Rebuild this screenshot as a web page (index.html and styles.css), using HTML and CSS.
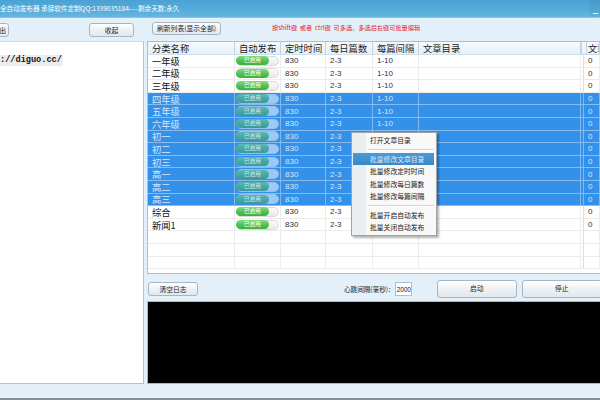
FILE: index.html
```html
<!DOCTYPE html>
<html lang="zh">
<head>
<meta charset="utf-8">
<title>全自动发布器</title>
<link rel="stylesheet" href="styles.css">
</head>
<body>
<div class="win">
  <div class="titlebar">
    <span class="title">全自动发布器 承接软件定制QQ:1339035184----剩余天数:永久</span>
    <span class="minbtn"><span class="minbar"></span></span>
  </div>
  <div class="main">
    <div class="leftcol">
      <div class="ltools">
        <button class="btn btn-cut">导出</button>
        <button class="btn btn-fold">收起</button>
      </div>
      <div class="logbox"><span class="url">://diguo.cc/</span></div>
    </div>
    <div class="rightcol">
      <div class="rtools">
        <button class="btn btn-refresh">刷新列表(显示全部)</button>
        <span class="hint">按shift键 &nbsp;或者 &nbsp;ctrl键 &nbsp;可多选，多选后右键可批量编辑</span>
      </div>
      <div class="grid">
        <div class="row head">
          <div class="c">分类名称</div><div class="c">自动发布</div><div class="c">定时时间</div><div class="c">每日篇数</div><div class="c">每篇间隔</div><div class="c">文章目录</div><div class="c split"></div><div class="c">文章</div>
        </div>
        <div class="row"><div class="c name">一年级</div><div class="c"><span class="track"><span class="pill">已启用</span></span></div><div class="c num">830</div><div class="c num">2-3</div><div class="c num">1-10</div><div class="c"></div><div class="c split"></div><div class="c num">0</div></div>
        <div class="row"><div class="c name">二年级</div><div class="c"><span class="track"><span class="pill">已启用</span></span></div><div class="c num">830</div><div class="c num">2-3</div><div class="c num">1-10</div><div class="c"></div><div class="c split"></div><div class="c num">0</div></div>
        <div class="row"><div class="c name">三年级</div><div class="c"><span class="track"><span class="pill">已启用</span></span></div><div class="c num">830</div><div class="c num">2-3</div><div class="c num">1-10</div><div class="c"></div><div class="c split"></div><div class="c num">0</div></div>
        <div class="row sel"><div class="c name">四年级</div><div class="c"><span class="track"><span class="pill">已启用</span></span></div><div class="c num">830</div><div class="c num">2-3</div><div class="c num">1-10</div><div class="c"></div><div class="c split"></div><div class="c num">0</div></div>
        <div class="row sel"><div class="c name">五年级</div><div class="c"><span class="track"><span class="pill">已启用</span></span></div><div class="c num">830</div><div class="c num">2-3</div><div class="c num">1-10</div><div class="c"></div><div class="c split"></div><div class="c num">0</div></div>
        <div class="row sel"><div class="c name">六年级</div><div class="c"><span class="track"><span class="pill">已启用</span></span></div><div class="c num">830</div><div class="c num">2-3</div><div class="c num">1-10</div><div class="c"></div><div class="c split"></div><div class="c num">0</div></div>
        <div class="row sel"><div class="c name">初一</div><div class="c"><span class="track"><span class="pill">已启用</span></span></div><div class="c num">830</div><div class="c num">2-3</div><div class="c num">1-10</div><div class="c"></div><div class="c split"></div><div class="c num">0</div></div>
        <div class="row sel"><div class="c name">初二</div><div class="c"><span class="track"><span class="pill">已启用</span></span></div><div class="c num">830</div><div class="c num">2-3</div><div class="c num">1-10</div><div class="c"></div><div class="c split"></div><div class="c num">0</div></div>
        <div class="row sel"><div class="c name">初三</div><div class="c"><span class="track"><span class="pill">已启用</span></span></div><div class="c num">830</div><div class="c num">2-3</div><div class="c num">1-10</div><div class="c"></div><div class="c split"></div><div class="c num">0</div></div>
        <div class="row sel"><div class="c name">高一</div><div class="c"><span class="track"><span class="pill">已启用</span></span></div><div class="c num">830</div><div class="c num">2-3</div><div class="c num">1-10</div><div class="c"></div><div class="c split"></div><div class="c num">0</div></div>
        <div class="row sel"><div class="c name">高二</div><div class="c"><span class="track"><span class="pill">已启用</span></span></div><div class="c num">830</div><div class="c num">2-3</div><div class="c num">1-10</div><div class="c"></div><div class="c split"></div><div class="c num">0</div></div>
        <div class="row sel"><div class="c name">高三</div><div class="c"><span class="track"><span class="pill">已启用</span></span></div><div class="c num">830</div><div class="c num">2-3</div><div class="c num">1-10</div><div class="c"></div><div class="c split"></div><div class="c num">0</div></div>
        <div class="row"><div class="c name">综合</div><div class="c"><span class="track"><span class="pill">已启用</span></span></div><div class="c num">830</div><div class="c num">2-3</div><div class="c num">1-10</div><div class="c"></div><div class="c split"></div><div class="c num">0</div></div>
        <div class="row"><div class="c name">新闻1</div><div class="c"><span class="track"><span class="pill">已启用</span></span></div><div class="c num">830</div><div class="c num">2-3</div><div class="c num">1-10</div><div class="c"></div><div class="c split"></div><div class="c num">0</div></div>
        <div class="row empty"><div class="c"></div><div class="c"></div><div class="c"></div><div class="c"></div><div class="c"></div><div class="c"></div><div class="c split"></div><div class="c"></div></div>
        <div class="row empty"><div class="c"></div><div class="c"></div><div class="c"></div><div class="c"></div><div class="c"></div><div class="c"></div><div class="c split"></div><div class="c"></div></div>
        <div class="row empty"><div class="c"></div><div class="c"></div><div class="c"></div><div class="c"></div><div class="c"></div><div class="c"></div><div class="c split"></div><div class="c"></div></div>
      </div>
      <div class="controls">
        <button class="btn btn-clear">清空日志</button>
        <span class="beat-label">心跳间隔(毫秒)：</span>
        <span class="beat-input">2000</span>
        <button class="btn btn-big btn-start">启动</button>
        <button class="btn btn-big btn-stop">停止</button>
      </div>
      <div class="console"></div>
    </div>
  </div>
  <div class="status"></div>

  <div class="menu">
    <div class="mi">打开文章目录</div>
    <div class="msep"></div>
    <div class="mi hot">批量修改文章目录</div>
    <div class="mi">批量修改定时时间</div>
    <div class="mi">批量修改每日篇数</div>
    <div class="mi">批量修改每篇间隔</div>
    <div class="msep"></div>
    <div class="mi">批量开启自动发布</div>
    <div class="mi">批量关闭自动发布</div>
  </div>
</div>
</body>
</html>
```

FILE: styles.css
```css
* { box-sizing: border-box; }

html, body {
  margin: 0;
  padding: 0;
  width: 600px;
  height: 400px;
  overflow: hidden;
}

body {
  font-family: "Noto Sans CJK SC", "Noto Sans", sans-serif;
  color: #111;
  background: #e3f0f9;
}

.win {
  position: relative;
  width: 600px;
  height: 400px;
  display: flex;
  flex-direction: column;
  overflow: hidden;
}

/* ---------- title bar ---------- */
.titlebar {
  height: 18px;
  flex: none;
  display: flex;
  align-items: center;
  justify-content: space-between;
  background: linear-gradient(to bottom, #4aa2d4 0%, #56acda 60%, #66b6e0 100%);
  border-bottom: 1px solid #8cc4e4;
}

.title {
  color: #fff;
  font-size: 6.6px;
  line-height: 1;
  padding-left: 0;
  white-space: nowrap;
  margin-top: -1px;
}

.minbtn {
  width: 10px;
  height: 17px;
  display: flex;
  align-items: flex-end;
  justify-content: center;
  padding-bottom: 3px;
  background: rgba(0, 0, 0, 0.04);
}

.minbar {
  width: 5px;
  height: 1px;
  background: #e8f4fb;
}

/* ---------- main area ---------- */
.main {
  height: 366px;
  flex: none;
  display: grid;
  grid-template-columns: 144px 1fr;
  column-gap: 3px;
}

.leftcol, .rightcol {
  display: flex;
  flex-direction: column;
  min-width: 0;
}

.ltools, .rtools {
  height: 23px;
  flex: none;
  display: flex;
  align-items: center;
}

/* buttons */
.btn {
  font-family: "Noto Sans CJK SC", sans-serif;
  font-size: 6.8px;
  color: #222;
  height: 14px;
  padding: 0;
  border: 1px solid #a9b6c2;
  border-radius: 3px;
  background: linear-gradient(to bottom, #fdfeff 0%, #eef2f5 50%, #e1e7ec 100%);
  line-height: 1;
  display: flex;
  align-items: center;
  justify-content: center;
  white-space: nowrap;
  flex: none;
}

.btn-cut {
  width: 45px;
  margin-left: -36px;
  margin-top: 1px;
  justify-content: flex-end;
  padding-right: 2px;
}

.btn-fold {
  width: 45px;
  margin-left: 80px;
  margin-top: 1px;
}

.btn-refresh {
  width: 69px;
  height: 13px;
  margin-left: 5px;
  margin-top: -3px;
}

.hint {
  margin-left: 51px;
  margin-top: -4px;
  font-size: 6.2px;
  color: #e0242a;
  white-space: nowrap;
}

/* left text box */
.logbox {
  flex: 1;
  background: #fff;
  border-top: 1px solid #c6dcea;
  border-right: 1px solid #a6c6da;
  border-bottom: 1px solid #a6c6da;
  padding-top: 1px;
}

.url {
  display: inline-block;
  font-family: "Liberation Mono", "DejaVu Sans Mono", monospace;
  font-weight: bold;
  font-size: 8.6px;
  line-height: 11px;
  color: #111;
  background: #ececec;
  padding-right: 1px;
}

/* ---------- data grid ---------- */
.grid {
  height: 233px;
  flex: none;
  background: #fff;
  border: 1px solid #9fc2d9;
  border-right: none;
  overflow: hidden;
}

.row {
  display: grid;
  grid-template-columns: 87px 46px 45px 47px 46px 162px 3px 1fr;
  height: 12.6px;
  border-bottom: 1px solid #ececec;
}

.c {
  border-right: 1px solid #ececec;
  display: flex;
  align-items: center;
  padding-left: 3px;
  overflow: hidden;
  white-space: nowrap;
  min-width: 0;
}

.c.split {
  padding: 0;
  border-right: 1px solid #dcdcdc;
}

.head {
  height: 13px;
  background: linear-gradient(to bottom, #f6fafd 0%, #e4f0f9 100%);
  border-bottom: 1px solid #cfe0ec;
}

.head .c {
  font-size: 9.3px;
  color: #222;
  border-right: 1px solid #c3d3df;
  padding-left: 4px;
}

.head .c.split {
  border-right: 1px solid #c3d3df;
  border-left: 1px solid #c3d3df;
}

.name {
  font-size: 9.3px;
  padding-left: 4px;
}

.num {
  font-family: "Liberation Sans", "DejaVu Sans", sans-serif;
  font-size: 8px;
  color: #333;
  padding-left: 4px;
}

/* toggle pill */
.track {
  width: 43px;
  height: 10px;
  border-radius: 5px;
  background: linear-gradient(to bottom, #fbfbfb, #e9e9e9);
  border: 1px solid #dadada;
  display: flex;
  align-items: center;
  margin-left: -2px;
}

.pill {
  width: 33px;
  height: 9px;
  margin-left: -1px;
  border-radius: 5px;
  background: linear-gradient(to bottom, #86dc84 0%, #52c052 55%, #3eaf40 100%);
  color: #fff;
  font-size: 5.6px;
  line-height: 9px;
  text-align: center;
}

/* selected rows */
.sel {
  background: #3391e9;
  border-bottom: 1px solid #86bdf1;
}

.sel .c {
  border-right-color: #7fb7ee;
}

.sel .name, .sel .num {
  color: #d6e7fb;
}

.sel .track {
  background: #9dc9f5;
  border-color: #8ec0f2;
}

.sel .pill {
  background: linear-gradient(to bottom, #5ab8b4 0%, #44a5a3 60%, #3b9a9b 100%);
  color: #cfe6f4;
}

/* ---------- controls ---------- */
.controls {
  height: 19px;
  margin-top: 5px;
  flex: none;
  display: flex;
  align-items: center;
}

.btn-clear {
  width: 50px;
  margin-left: 1px;
  margin-top: 1px;
}

.beat-label {
  margin-left: 146px;
  width: 54px;
  font-size: 6.6px;
  white-space: nowrap;
  color: #222;
}

.beat-input {
  width: 28px;
  height: 14px;
  margin-top: 1px;
  background: #fff;
  border: 1px solid #a3c4dc;
  font-family: "Liberation Sans", sans-serif;
  font-size: 6.4px;
  display: flex;
  align-items: center;
  padding-left: 1px;
}

.btn-big {
  width: 80px;
  height: 18px;
  border-radius: 3px;
}

.btn-start { margin-left: 25px; }
.btn-stop { margin-left: 5px; }

.console {
  height: 83px;
  margin-top: 3px;
  flex: none;
  background: #000;
  border: 1px solid #9dbdd3;
  border-right: none;
}

/* ---------- status ---------- */
.status {
  flex: 1;
  border-bottom: 2px solid #8a8f94;
}

/* ---------- context menu ---------- */
.menu {
  position: absolute;
  left: 351px;
  top: 132px;
  width: 86px;
  padding: 1px 2px 2px 1px;
  background: linear-gradient(to right, #e9eef1 0px, #e9eef1 14px, #f8f8f8 14px);
  border: 1px solid #9da3a8;
  box-shadow: 2px 2px 2px rgba(0, 0, 0, 0.3);
}

.mi {
  height: 12.2px;
  padding-left: 17px;
  display: flex;
  align-items: center;
  font-size: 6.8px;
  color: #222;
  white-space: nowrap;
}

.mi.hot {
  background: linear-gradient(to bottom, #4b9ad6, #3a88c8);
  color: #dcebf7;
}

.msep {
  height: 7px;
  margin-left: 15px;
  display: flex;
  align-items: center;
}

.msep::before {
  content: "";
  display: block;
  width: 100%;
  height: 1px;
  background: #d2d6d9;
  box-shadow: 0 1px 0 #fff;
}
```
